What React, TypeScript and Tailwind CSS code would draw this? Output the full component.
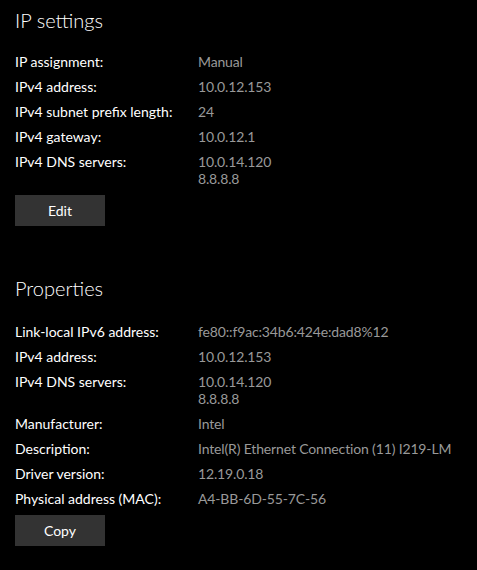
import React from 'react';

type Row = { label: string; value: string[] };

const ipSettings: Row[] = [
    { label: 'IP assignment:', value: ['Manual'] },
    { label: 'IPv4 address:', value: ['10.0.12.153'] },
    { label: 'IPv4 subnet prefix length:', value: ['24'] },
    { label: 'IPv4 gateway:', value: ['10.0.12.1'] },
    { label: 'IPv4 DNS servers:', value: ['10.0.14.120', '8.8.8.8'] },
];

const properties: Row[] = [
    { label: 'Link-local IPv6 address:', value: ['fe80::f9ac:34b6:424e:dad8%12'] },
    { label: 'IPv4 address:', value: ['10.0.12.153'] },
    { label: 'IPv4 DNS servers:', value: ['10.0.14.120', '8.8.8.8'] },
    { label: 'Manufacturer:', value: ['Intel'] },
    { label: 'Description:', value: ['Intel(R) Ethernet Connection (11) I219-LM'] },
    { label: 'Driver version:', value: ['12.19.0.18'] },
    { label: 'Physical address (MAC):', value: ['A4-BB-6D-55-7C-56'] },
];

function Section({ title, rows, button, className }: { title: string; rows: Row[]; button: string; className?: string }) {
    return (
        <section className={className}>
            <h2 className="text-[20px] leading-[28px] font-light text-white">{title}</h2>
            <div className="mt-[19px] flex flex-col gap-2">
                {rows.map((r) => (
                    <div key={r.label} className="flex text-[14px] leading-[17px]">
                        <div className="w-[183px] shrink-0 text-white">{r.label}</div>
                        <div className="text-[#999999] whitespace-nowrap tracking-[-0.15px]">
                            {r.value.map((v) => (
                                <div key={v}>{v}</div>
                            ))}
                        </div>
                    </div>
                ))}
                <button className="w-[90px] h-[31px] bg-[#333333] text-white text-[14px]">{button}</button>
            </div>
        </section>
    );
}

export default function App() {
    return (
        <div
            className="w-[477px] h-[570px] bg-black px-[15px] pt-[6px] overflow-hidden"
            style={{ fontFamily: 'Lato, "Open Sans", sans-serif' }}
        >
            <Section title="IP settings" rows={ipSettings} button="Edit" />
            <Section title="Properties" rows={properties} button="Copy" className="mt-[48px] [&>div]:mt-[21px]" />
        </div>
    );
}
